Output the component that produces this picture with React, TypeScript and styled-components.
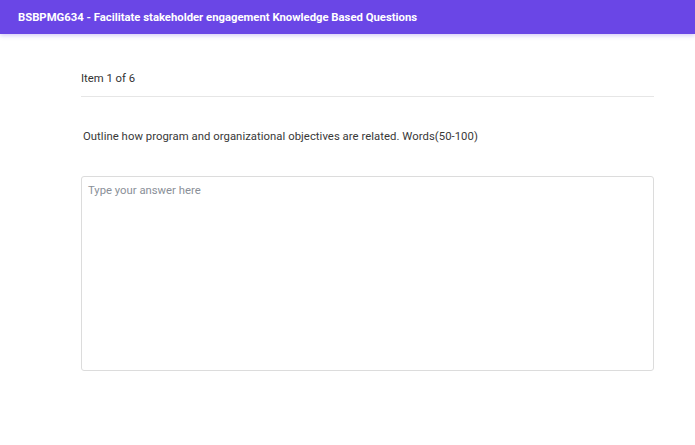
import React, { useState } from "react";
import styled, { createGlobalStyle } from "styled-components";

const GlobalStyle = createGlobalStyle`
  html, body {
    margin: 0;
    padding: 0;
    background: #fff;
    font-family: Roboto, "Liberation Sans", sans-serif;
  }
  * { box-sizing: border-box; }
`;

const Header = styled.header`
  height: 34px;
  background: #6a46e6;
  box-shadow: 0 2px 4px rgba(106, 70, 230, 0.25);
  display: flex;
  align-items: center;
  padding: 0 18px;
  margin-bottom: 5px;
`;

const Title = styled.h1`
  margin: 0;
  color: #fff;
  font-size: 11.3px;
  font-weight: 700;
`;

const Content = styled.main`
  width: 573px;
  margin: 0 0 0 81px;
  padding-top: 33px;
`;

const ItemCounter = styled.div`
  font-size: 11.3px;
  color: #333;
  padding-bottom: 11px;
  border-bottom: 1px solid #e6e6e6;
`;

const Question = styled.p`
  margin: 33px 0 0 2px;
  font-size: 11.3px;
  letter-spacing: 0.05px;
  color: #383838;
`;

const Answer = styled.textarea`
  display: block;
  width: 100%;
  height: 195px;
  margin-top: 33px;
  padding: 7px 6px;
  border: 1px solid #dcdcdc;
  border-radius: 3px;
  resize: none;
  font-family: Roboto, "Liberation Sans", sans-serif;
  font-size: 11.3px;
  color: #333;
  outline: none;

  &::placeholder {
    color: #8a8f98;
  }
`;

const App: React.FC = () => {
  const [answer, setAnswer] = useState("");

  return (
    <>
      <GlobalStyle />
      <Header>
        <Title>BSBPMG634 - Facilitate stakeholder engagement Knowledge Based Questions</Title>
      </Header>
      <Content>
        <ItemCounter>Item 1 of 6</ItemCounter>
        <Question>
          Outline how program and organizational objectives are related. Words(50-100)
        </Question>
        <Answer
          placeholder="Type your answer here"
          value={answer}
          onChange={(e) => setAnswer(e.target.value)}
        />
      </Content>
    </>
  );
};

export default App;
